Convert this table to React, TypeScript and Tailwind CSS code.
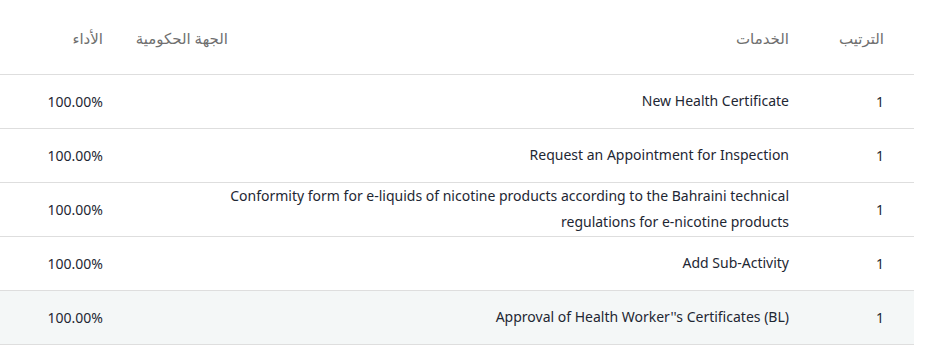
import React from "react";

const rows = [
  { rank: "1", service: "New Health Certificate", entity: "", perf: "100.00%" },
  { rank: "1", service: "Request an Appointment for Inspection", entity: "", perf: "100.00%" },
  {
    rank: "1",
    service:
      "Conformity form for e-liquids of nicotine products according to the Bahraini technical regulations for e-nicotine products",
    entity: "",
    perf: "100.00%",
  },
  { rank: "1", service: "Add Sub-Activity", entity: "", perf: "100.00%" },
  { rank: "1", service: "Approval of Health Worker''s Certificates (BL)", entity: "", perf: "100.00%", hover: true },
];

export default function App() {
  return (
    <div className="bg-white w-[929px] h-[356px] pr-[15px]" style={{ fontFamily: '"Noto Sans", "DejaVu Sans", sans-serif' }}>
      <table dir="rtl" className="w-[914px] border-collapse table-fixed text-[14px]">
        <colgroup>
          <col className="w-[115px]" />
          <col className="w-[571px]" />
          <col className="w-[115px]" />
          <col className="w-[113px]" />
        </colgroup>
        <thead>
          <tr className="h-[74px] border-b border-[#dedede] text-[15px]">
            <th className="text-right font-normal text-[#6f6f6f] pr-[30px] pt-[2px]">الترتيب</th>
            <th className="text-right font-normal text-[#6f6f6f] pr-[10px] pt-[2px]">الخدمات</th>
            <th className="text-right font-normal text-[#6f6f6f] pr-0 pt-[2px]">الجهة الحكومية</th>
            <th className="text-right font-normal text-[#6f6f6f] pr-[10px] pt-[2px]">الأداء</th>
          </tr>
        </thead>
        <tbody>
          {rows.map((r, i) => (
            <tr key={i} className={`h-[54px] border-b border-[#dedede] text-[#1e2733] ${r.hover ? "bg-[#f4f7f7]" : ""}`}>
              <td className="text-right pr-[30px]">{r.rank}</td>
              <td className="text-right pr-[10px] leading-[26px]">{r.service}</td>
              <td className="text-right pr-0">{r.entity}</td>
              <td className="text-right pr-[10px]">{r.perf}</td>
            </tr>
          ))}
        </tbody>
      </table>
    </div>
  );
}
